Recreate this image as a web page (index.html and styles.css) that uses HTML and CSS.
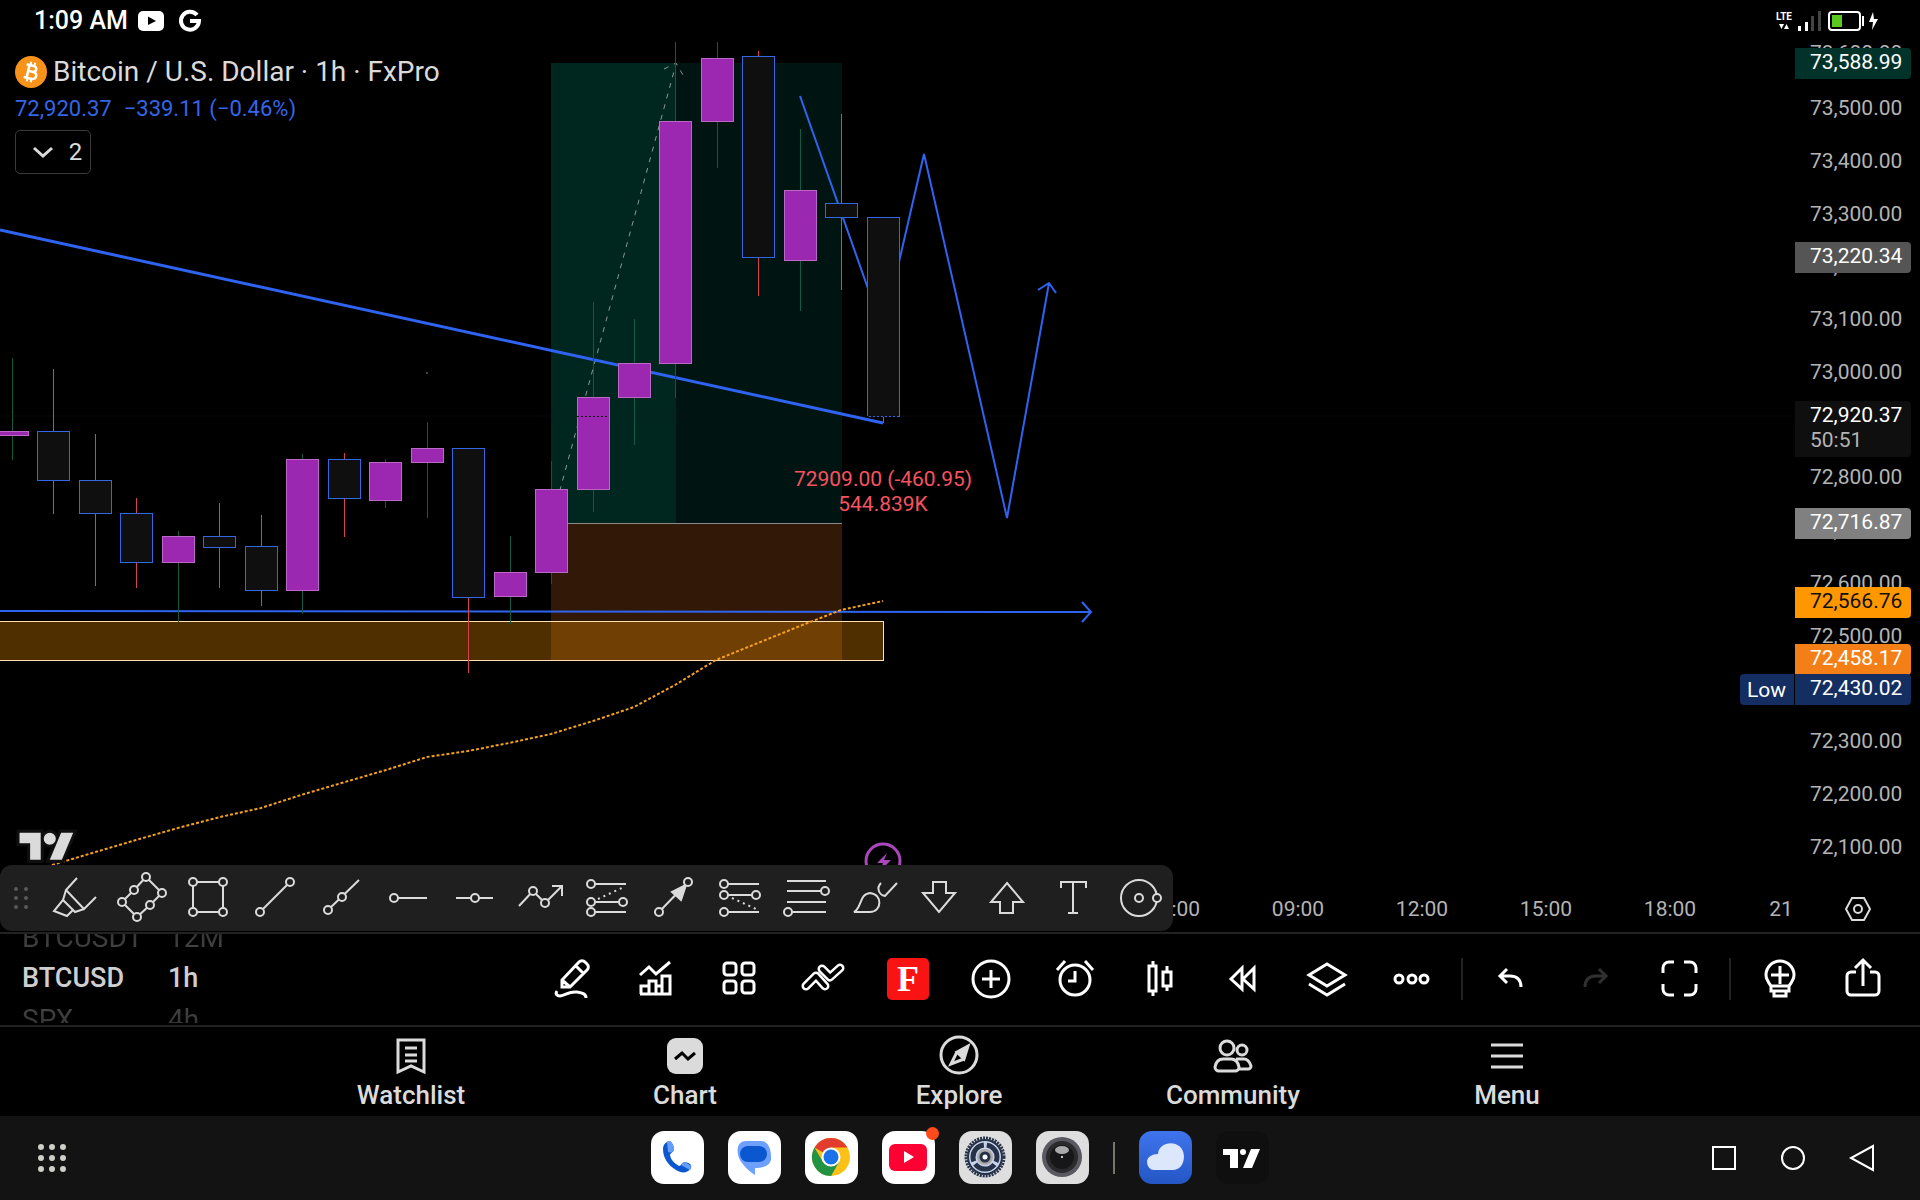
FILE: index.html
```html
<!DOCTYPE html>
<html lang="en">
<head>
<meta charset="utf-8">
<meta name="viewport" content="width=device-width, initial-scale=1">
<title>BTCUSD 1h</title>
<link rel="stylesheet" href="styles.css">
</head>
<body>
<section class="stage">
  <svg class="plot" aria-hidden="true">
    <!-- position tool -->
    <rect class="profit" x="551" y="63" width="291" height="460"/>
    <rect class="profit" x="551" y="63" width="125" height="460"/>
    <rect class="loss" x="551" y="523" width="291" height="137"/>
    <path class="entry" d="M551 523H842"/>
    <!-- support zone -->
    <rect class="zone" x="-4" y="621" width="887" height="39"/>
    <path class="price-line" d="M0 416H1795"/>
    <path class="projection" d="M551 523L676 64M664 69L676 63L683 75"/>
    <!-- trend lines -->
    <path class="trend" d="M0 230L883 423"/>
    <path class="draw" d="M0 611L1091 612M1082 602L1091 612L1082 622"/>
    <path class="draw" d="M800 96L883 331L924 154L1007 518L1049 283M1038 290L1049 283L1056 293"/>
    <!-- wicks -->
    <path class="wick-up" d="M12 358V460M178 531V622M302 454V614M385 459V508M427 422V518M510 536V624M551 461V584M593 302V512M634 319V445M675 42V398M717 42V168M800 129V311"/>
    <path class="wick-down" d="M53 369V514M95 434V586M136 498V588M219 503V588M261 515V606M344 453V537M468 448V673M758 51V296M841 114V290M883 217V423"/>
    <circle cx="427" cy="373" r="1" fill="#555"/>
    <!-- candle bodies -->
    <g class="up">
      <rect x="-4" y="431" width="32" height="4"/>
      <rect x="162" y="536" width="32" height="26"/>
      <rect x="286" y="459" width="32" height="131"/>
      <rect x="369" y="462" width="32" height="38"/>
      <rect x="411" y="448" width="32" height="14"/>
      <rect x="494" y="572" width="32" height="24"/>
      <rect x="535" y="489" width="32" height="83"/>
      <rect x="577" y="397" width="32" height="92"/>
      <rect x="618" y="363" width="32" height="34"/>
      <rect x="659" y="121" width="32" height="242"/>
      <rect x="701" y="58" width="32" height="63"/>
      <rect x="784" y="190" width="32" height="70"/>
    </g>
    <g class="down">
      <rect x="37" y="431" width="32" height="49"/>
      <rect x="79" y="480" width="32" height="33"/>
      <rect x="120" y="513" width="32" height="49"/>
      <rect x="203" y="536" width="32" height="11"/>
      <rect x="245" y="546" width="32" height="44"/>
      <rect x="328" y="459" width="32" height="39"/>
      <rect x="452" y="448" width="32" height="149"/>
      <rect x="742" y="56" width="32" height="201"/>
      <rect x="825" y="203" width="32" height="14"/>
      <rect x="867" y="217" width="32" height="199"/>
    </g>
    <path class="price-dots" d="M577 416H609M867 416H899"/>
    <!-- moving average -->
    <path class="average" d="M52 865L99 851L136 840L178 828L220 817L261 808L301 795L345 782L386 770L427 757L468 751L509 743L551 734L593 721L634 707L675 685L716 660L758 643L800 626L841 610L883 601"/>
    <g class="label"><text x="883" y="486">72909.00 (-460.95)</text><text x="883" y="511">544.839K</text></g>
    <g class="flash"><circle cx="883" cy="861" r="17"/><path d="M887 853L877 863H883L880 871L891 860H884Z"/></g>
  </svg>

  <header class="status">
    <div class="status-side">
      <time>1:09 AM</time>
      <svg width="26" height="20" viewBox="0 0 26 20"><rect width="26" height="20" rx="5" fill="#fff"/><path d="M10 5.500V14L18 10Z" fill="#000"/></svg>
      <svg class="google" width="22" height="22" viewBox="0 0 22 22"><path d="M18 5A9 9 0 1 0 20 11H11" fill="none" stroke="#fff" stroke-width="4"/></svg>
    </div>
    <div class="status-side right">
      <span class="lte">LTE<svg width="10" height="5" viewBox="0 0 10 5"><path d="M0 0H5L2.500 5ZM5 5H10L7.500 0Z" fill="#fff"/></svg></span>
      <svg width="24" height="20" viewBox="0 0 24 20"><path d="M0 15h3v5h-3zM7 11h3v9h-3z" fill="#fff"/><path d="M13 5h3v15h-3zM20 0h3v20h-3z" fill="#444"/></svg>
      <svg class="battery" width="50" height="22" viewBox="0 0 50 22"><rect x="1" y="2" width="31" height="18" rx="3" fill="none" stroke="#fff" stroke-width="2"/><rect x="4" y="5" width="10" height="12" fill="#5ac81e"/><path d="M35 6v10" stroke="#fff" stroke-width="2"/><path d="M45 2L41 12H45L44 20L50 9H46Z" fill="#fff"/></svg>
    </div>
  </header>

  <div class="chart-row">
    <main class="pane">
      <h1 class="symbol">
        <svg width="32" height="32" viewBox="0 0 32 32"><circle cx="16" cy="16" r="16" fill="#f7931a"/><g fill="none" stroke="#fff" transform="rotate(13 16 16)"><path d="M10 9.500H17.500A3 3 0 0 1 17.500 15.500H13H18.500A3.500 3.500 0 0 1 18.500 22.500H10M13 9V23" stroke-width="2.600"/><path d="M14 6V10M18 6V10M14 22V26M18 22V26" stroke-width="2"/></g></svg>
        Bitcoin / U.S. Dollar · 1h · FxPro
      </h1>
      <p class="quote"><span>72,920.37</span><span>−339.11 (−0.46%)</span></p>
      <button class="count" aria-label="Show 2 indicators"><svg width="22" height="22" viewBox="0 0 22 22"><path d="M2 7L11 15L20 7" fill="none" stroke="#dbdbdb" stroke-width="3"/></svg>2</button>
      <svg class="brand" width="62" height="38" viewBox="-3 1 41 25"><path d="M14 22H7V11H0V4H14ZM28 22H20L27.500 4H35.500ZM24 8A4 4 0 1 1 16 8A4 4 0 1 1 24 8Z" fill="#dbdbdb" stroke="#0f0f0f" stroke-width="4" paint-order="stroke"/></svg>
    </main>
    <aside class="price-axis">
      <span class="tag over">73,600.00</span>
      <ul class="ticks">
        <li>73,500.00</li><li>73,400.00</li><li>73,300.00</li><li>73,200.00</li><li>73,100.00</li><li>73,000.00</li><li></li><li>72,800.00</li><li>72,700.00</li><li>72,600.00</li><li>72,500.00</li><li></li><li>72,300.00</li><li>72,200.00</li><li>72,100.00</li>
      </ul>
      <span class="tag target">73,588.99</span>
      <span class="tag alert">73,220.34</span>
      <span class="tag last">72,920.37<small>50:51</small></span>
      <span class="tag entry-tag">72,716.87</span>
      <span class="tag ma">72,566.76</span>
      <span class="tag stop">72,458.17</span>
      <span class="tag low">72,430.02</span>
      <span class="tag low-name">Low</span>
    </aside>
  </div>

  <div class="time-axis">
    <span>06:00</span><span>09:00</span><span>12:00</span><span>15:00</span><span>18:00</span><span class="day">21</span>
    <button class="axis-settings" aria-label="Axis settings"><svg width="28" height="24" viewBox="0 0 28 24"><g fill="none" stroke="#dbdbdb" stroke-width="2"><path d="M8 1H20L26 12L20 23H8L2 12Z"/><circle cx="14" cy="12" r="4"/></g></svg></button>
  </div>

  <div class="drawbar" role="toolbar" aria-label="Favorite drawings">
    <svg class="grip" width="14" height="22" viewBox="0 0 14 22"><path d="M2 2h0M12 2h0M2 11h0M12 11h0M2 20h0M12 20h0" stroke="#5a5a5a" stroke-width="4" stroke-linecap="round"/></svg>
    <button aria-label="Highlighter"><svg viewBox="0 0 44 44"><path d="M24 2L13 14L31 33L43 21M13 14L10 24L1 35L14 40L20 34L22 36L31 33M10 24L20 34"/></svg></button>
    <button aria-label="Rotated rectangle"><svg viewBox="0 0 44 44"><path d="M26 1L42 17L30 29L17 41L2 26L14 14Z"/><circle cx="26" cy="1" r="4"/><circle cx="42" cy="17" r="4"/><circle cx="30" cy="29" r="4"/><circle cx="17" cy="41" r="4"/><circle cx="2" cy="26" r="4"/><circle cx="14" cy="14" r="4"/></svg></button>
    <button aria-label="Rectangle"><svg viewBox="0 0 44 44"><path d="M7 6H37V36H7Z"/><circle cx="7" cy="6" r="4"/><circle cx="37" cy="6" r="4"/><circle cx="7" cy="36" r="4"/><circle cx="37" cy="36" r="4"/></svg></button>
    <button aria-label="Trend line"><svg viewBox="0 0 44 44"><path d="M7 36L37 6"/><circle cx="7" cy="36" r="4"/><circle cx="37" cy="6" r="4"/></svg></button>
    <button aria-label="Ray"><svg viewBox="0 0 44 44"><path d="M9 34L40 4"/><circle cx="9" cy="34" r="4"/><circle cx="23" cy="21" r="4"/></svg></button>
    <button aria-label="Horizontal ray"><svg viewBox="0 0 44 44"><path d="M8 22H41"/><circle cx="8" cy="22" r="4"/></svg></button>
    <button aria-label="Horizontal line"><svg viewBox="0 0 44 44"><path d="M4 22H41"/><circle cx="23" cy="22" r="4"/></svg></button>
    <button aria-label="Path"><svg viewBox="0 0 44 44"><path d="M0 30L14 15L26 27L43 10M33 10H43V20"/><circle cx="14" cy="15" r="4"/><circle cx="26" cy="27" r="4"/></svg></button>
    <button aria-label="Long position"><svg viewBox="0 0 44 44"><path d="M5 8H40M5 26H37M5 36H40"/><path class="dots" d="M12 23L38 11"/><circle cx="5" cy="8" r="4"/><circle cx="5" cy="26" r="4"/><circle cx="37" cy="26" r="4"/><circle cx="5" cy="36" r="4"/></svg></button>
    <button aria-label="Arrow"><svg viewBox="0 0 44 44"><path d="M7 36L36 6"/><path class="solid" d="M34 9L20 16L29 24Z"/><circle cx="7" cy="36" r="4"/><circle cx="36" cy="6" r="4"/></svg></button>
    <button aria-label="Short position"><svg viewBox="0 0 44 44"><path d="M5 8H40M5 19H37M5 36H40"/><path class="dots" d="M13 22L37 33"/><circle cx="5" cy="8" r="4"/><circle cx="5" cy="19" r="4"/><circle cx="37" cy="19" r="4"/><circle cx="5" cy="36" r="4"/></svg></button>
    <button aria-label="Fib retracement"><svg viewBox="0 0 44 44"><path d="M2 5H41M2 15H40M2 26H41M3 36H41"/><circle cx="40" cy="15" r="4"/><circle cx="3" cy="36" r="4"/></svg></button>
    <button aria-label="Brush"><svg viewBox="0 0 44 44"><path d="M2 36C10 32 7 18 18 17C31 18 30 36 18 36ZM29 7C24 12 27 19 33 20L45 7"/></svg></button>
    <button aria-label="Arrow down"><svg viewBox="0 0 44 44"><path d="M15 6H28V17H37L21 36L5 17H15Z"/></svg></button>
    <button aria-label="Arrow up"><svg viewBox="0 0 44 44"><path d="M22 7L38 26H28V37H15V26H6Z"/></svg></button>
    <button aria-label="Text"><svg viewBox="0 0 44 44"><path d="M10 12V6H35V12M22 6V37M17 37H27"/></svg></button>
    <button aria-label="Circle"><svg viewBox="0 0 44 44"><circle cx="21" cy="22" r="18"/><circle cx="21" cy="22" r="4"/><circle cx="39" cy="22" r="4"/></svg></button>
  </div>
</section>

<section class="tools">
  <div class="wheel symbols"><span>BTCUSDT</span><b>BTCUSD</b><span>SPX</span></div>
  <div class="wheel intervals"><span>12M</span><b>1h</b><span>4h</span></div>
  <div class="actions">
    <button aria-label="Draw"><svg viewBox="0 0 44 44"><path d="M12 30V23L29 5A4 4 0 0 1 35 5L37 7A4 4 0 0 1 37 13L20 30ZM26 9L33 16M12 23L20 30M7 34C5 37 7 39 10 39C16 38 19 34 27 35C33 36 36 37 36 41"/></svg></button>
    <button aria-label="Indicators"><svg viewBox="0 0 44 44"><path d="M6 18L15 10L22 17L36 5M7 37V29H15V24H22V37M15 29V37M22 29H28M28 37V19H36V37ZM6 37H37"/></svg></button>
    <button aria-label="Layouts"><svg viewBox="0 0 44 44"><rect x="6" y="6" width="12" height="12" rx="3"/><rect x="24" y="6" width="12" height="12" rx="3"/><rect x="6" y="24" width="12" height="12" rx="3"/><rect x="24" y="24" width="12" height="12" rx="3"/></svg></button>
    <button aria-label="Patterns"><svg viewBox="0 0 44 44"><g stroke-linecap="round" stroke-linejoin="round"><path d="M4 29L14 19L23 29" stroke-width="9"/><path d="M4 29L14 19L23 29" stroke="#000" stroke-width="4"/><path d="M20 12L28 20L38 11" stroke-width="9"/><path d="M20 12L28 20L38 11" stroke="#000" stroke-width="4"/></g></svg></button>
    <button aria-label="Favorite indicator"><span class="fbadge">F</span></button>
    <button aria-label="Add"><svg viewBox="0 0 44 44"><circle cx="21" cy="22" r="18"/><path d="M12 22H30M21 13V31"/></svg></button>
    <button aria-label="Alert"><svg viewBox="0 0 44 44"><circle cx="21" cy="23" r="15"/><path d="M21 14V24H14M3 13L11 4M31 4L39 13"/></svg></button>
    <button aria-label="Chart type"><svg viewBox="0 0 44 44"><path d="M11 9H18V34H11ZM15 4V9M15 34V39M25 15H33V29H25ZM29 9V15M29 29V34"/></svg></button>
    <button aria-label="Replay"><svg viewBox="0 0 44 44"><path d="M9 22L20 11V32ZM21 22L32 11V32Z"/></svg></button>
    <button aria-label="Object tree"><svg viewBox="0 0 44 44"><path d="M21 7L39 18L21 29L3 18ZM3 27L21 38L39 27"/></svg></button>
    <button aria-label="More"><svg viewBox="0 0 44 44"><circle cx="9" cy="22" r="4"/><circle cx="22" cy="22" r="4"/><circle cx="34" cy="22" r="4"/></svg></button>
    <i class="rule"></i>
    <button aria-label="Undo"><svg viewBox="0 0 44 44"><path d="M31 30C31 22 26 19 20 19H10M17 12L10 19L17 26"/></svg></button>
    <button aria-label="Redo" disabled><svg viewBox="0 0 44 44"><path d="M11 30C11 22 16 19 22 19H32M25 12L32 19L25 26"/></svg></button>
    <button aria-label="Full screen"><svg viewBox="0 0 44 44"><path d="M5 16V11A6 6 0 0 1 11 5H16M26 5H32A6 6 0 0 1 38 11V16M38 27V32A6 6 0 0 1 32 38H26M16 38H11A6 6 0 0 1 5 32V27"/></svg></button>
    <i class="rule"></i>
    <button aria-label="Ideas"><svg viewBox="0 0 44 44"><path d="M13 29C10 25 8 22 8 18A14 14 0 0 1 36 18C36 22 34 25 31 29ZM13 29V34H31V29M16 34V39H28V34M13 18H31M22 9V27"/></svg></button>
    <button aria-label="Share"><svg viewBox="0 0 44 44"><path d="M14 15H9A4 4 0 0 0 5 19V34A4 4 0 0 0 9 38H33A4 4 0 0 0 37 34V19A4 4 0 0 0 33 15H28M21 29V4M13 11L21 3L29 11"/></svg></button>
  </div>
</section>

<nav class="tabs">
  <a href="#watchlist"><svg viewBox="0 0 40 40"><path d="M7 4H33V36L20 30L7 36ZM14 12H26M14 19H26M14 25H26"/></svg>Watchlist</a>
  <a href="#chart"><svg viewBox="0 0 40 40"><rect x="2" y="2" width="36" height="36" rx="9" fill="#dbdbdb" stroke="none"/><path d="M10 23L17 17L23 23L30 17" stroke="#000"/></svg>Chart</a>
  <a href="#explore"><svg viewBox="0 0 40 40"><circle cx="20" cy="19" r="18"/><path d="M29 10L25 23L18 16Z" fill="#dbdbdb"/><path d="M18 16L12 28L25 23"/></svg>Explore</a>
  <a href="#community"><svg viewBox="0 0 40 40"><circle cx="14" cy="12" r="7"/><circle cx="29" cy="14" r="5"/><path d="M6 35A4 4 0 0 1 2 31C3 26 6 23 10 23H18C22 23 25 26 26 31A4 4 0 0 1 22 35ZM23 23H31C35 23 37 27 38 30A3 3 0 0 1 35 33H26"/></svg>Community</a>
  <a href="#menu"><svg viewBox="0 0 40 40"><path d="M4 9H36M4 20H36M4 31H36"/></svg>Menu</a>
</nav>

<footer class="dock">
  <div class="dock-left"><button aria-label="All apps"><svg width="30" height="30" viewBox="0 0 30 30"><path d="M4 4h0M15 4h0M26 4h0M4 15h0M15 15h0M26 15h0M4 26h0M15 26h0M26 26h0" stroke="#cfcfc8" stroke-width="6" stroke-linecap="round"/></svg></button></div>
  <div class="apps">
    <button class="app" aria-label="Phone"><svg viewBox="0 0 53 53"><path d="M16 11C19 9 22 11 23 18C23 21 19 22 19 24C20 29 23 32 28 35C30 35 31 31 34 31C39 32 41 34 40 37C37 42 31 43 25 39C17 34 12 27 12 18C12 14 14 12 16 11Z" fill="#0b57d0"/><path d="M16 11C19 9 22 11 23 18C23 21 19 22 17 21ZM30 34C31 31 34 30 37 33C40 34 41 35 39 39Z" fill="#669df6"/></svg></button>
    <button class="app" aria-label="Messages"><svg viewBox="0 0 53 53"><path d="M18 10H33C40 10 43 18 43 25C44 33 38 37 27 37V44C22 41 17 36 14 32C8 25 7 10 18 10Z" fill="#6ea0ff"/><rect x="12" y="15" width="27" height="16" rx="8" fill="#0b57d0"/></svg></button>
    <button class="app" aria-label="Chrome"><svg viewBox="0 0 53 53"><circle cx="26" cy="26" r="19" fill="#fbc116"/><path d="M26 26L9.500 16.500A19 19 0 0 1 42.500 16.500H26Z" fill="#e33b2e"/><path d="M9.500 16.500A19 19 0 0 0 26 45L34.200 30.700L26 26L18 31Z" fill="#229342"/><circle cx="26" cy="26" r="9.500" fill="#fff"/><circle cx="26" cy="26" r="7.500" fill="#1a73e8"/></svg></button>
    <button class="app notify" aria-label="YouTube"><svg viewBox="0 0 53 53"><rect x="7" y="13" width="38" height="27" rx="6" fill="#ff0033"/><path d="M22 20V32L32 26Z" fill="#fff"/></svg></button>
    <button class="app metal" aria-label="Settings"><svg viewBox="0 0 53 53"><circle cx="26" cy="26" r="19" fill="none" stroke="#263248" stroke-width="3" stroke-dasharray="2 1"/><circle cx="26" cy="26" r="17" fill="#c7d3ea" stroke="#263248" stroke-width="2"/><circle cx="26" cy="26" r="12" fill="none" stroke="#263248" stroke-width="5" stroke-dasharray="22 3" stroke-dashoffset="-8"/><circle cx="26" cy="26" r="8" fill="#aaa"/><circle cx="26" cy="26" r="4" fill="#fff" stroke="#263248" stroke-width="3"/></svg></button>
    <button class="app metal" aria-label="Camera"><svg viewBox="0 0 53 53"><circle cx="26" cy="26" r="20" fill="#5a5961"/><circle cx="26" cy="26" r="16" fill="#2b2b2e"/><circle cx="26" cy="26" r="12" fill="#171719"/><ellipse cx="26" cy="19" rx="7" ry="4" fill="#aaa"/><circle cx="26" cy="26" r="1" fill="#fff"/></svg></button>
    <i class="divider"></i>
    <button class="app cloud" aria-label="Weather"><svg viewBox="0 0 53 53"><path d="M15 39A7 8 0 0 1 8 31C8 26 13 23 19 23C20 9 44 8 45 25C45 34 40 39 34 39Z" fill="#dce7fb"/></svg></button>
    <button class="app dark" aria-label="TradingView"><svg viewBox="0 0 53 53"><path d="M22 37H14V24H7V18H22ZM36 37H27L35 18H44ZM30 21A3 3 0 1 1 24 21A3 3 0 1 1 30 21Z" fill="#fff"/></svg></button>
  </div>
  <div class="dock-right">
    <button aria-label="Recents"><svg viewBox="0 0 28 28"><rect x="3" y="3" width="22" height="22"/></svg></button>
    <button aria-label="Home"><svg viewBox="0 0 28 28"><circle cx="14" cy="14" r="11"/></svg></button>
    <button aria-label="Back"><svg viewBox="0 0 28 28"><path d="M25 2V26L3 14Z"/></svg></button>
  </div>
</footer>
</body>
</html>
```
FILE: styles.css
```css
* { box-sizing: border-box; }
body {
  margin: 0;
  min-height: 100vh;
  display: flex;
  flex-direction: column;
  background: #000;
  color: #dbdbdb;
  font-family: Roboto, "Liberation Sans", sans-serif;
  overflow-x: hidden;
}
button {
  margin: 0;
  padding: 0;
  border: 0;
  background: none;
  color: inherit;
  font: inherit;
  display: flex;
  align-items: center;
  justify-content: center;
}
svg { display: block; flex: none; overflow: visible; }
a { color: inherit; text-decoration: none; }

/* chart stage */
.stage {
  position: relative;
  flex: 1;
  display: flex;
  flex-direction: column;
}
.plot { position: absolute; inset: 0; width: 100%; height: 100%; overflow: hidden; }
.profit { fill: #00a082; fill-opacity: 0.13; }
.loss { fill: #311807; }
.entry { stroke: #8a8a8a; shape-rendering: crispEdges; }
.zone { fill: #ff9800; fill-opacity: 0.31; stroke: #ffe0b2; shape-rendering: crispEdges; }
.price-line { stroke: #151515; stroke-dasharray: 1 2; }
.price-dots { stroke: #0f0f0f; stroke-width: 1; stroke-dasharray: 2 2; shape-rendering: crispEdges; }
.projection { fill: none; stroke: #8a9a94; stroke-dasharray: 5 6; }
.trend { stroke: #2f64f2; stroke-width: 3; }
.draw { fill: none; stroke: #2f64f2; stroke-width: 2; }
.wick-up { stroke: #0e5a45; shape-rendering: crispEdges; }
.wick-down { stroke: #d9434e; shape-rendering: crispEdges; }
.up { fill: #9c27b0; stroke: #b968c6; shape-rendering: crispEdges; }
.down { fill: #0f0f0f; stroke: #3467e4; shape-rendering: crispEdges; }
.average { fill: none; stroke: #f5a11f; stroke-width: 2; stroke-dasharray: 3 2; }
.label { fill: #f7525f; font-size: 21px; text-anchor: middle; }
.flash circle { fill: none; stroke: #ab47bc; stroke-width: 3; }
.flash path { fill: #ab47bc; }

.status {
  position: relative;
  height: 40px;
  padding: 0 42px 0 34px;
  display: flex;
  justify-content: space-between;
  align-items: center;
  color: #fff;
}
.status-side { display: flex; align-items: center; gap: 8px; height: 40px; padding-top: 1px; }
.status .right { gap: 6px; }
.status time { font-size: 25px; font-weight: 500; margin-right: 2px; }
.google { margin-left: 7px; }
.lte {
  display: flex;
  flex-direction: column;
  align-items: center;
  gap: 2px;
  font-size: 10px;
  font-weight: 700;
  line-height: 10px;
}

.chart-row { position: relative; flex: 1; display: flex; }
.pane { flex: 1; display: flex; flex-direction: column; align-items: flex-start; padding: 14px 15px 0; }
.symbol {
  margin: 0;
  display: flex;
  align-items: center;
  gap: 6px;
  font-size: 28px;
  line-height: 36px;
  font-weight: 400;
}
.quote {
  margin: 4px 0 6px;
  display: flex;
  gap: 12px;
  color: #3565e8;
  font-size: 22px;
  line-height: 30px;
}
.count {
  width: 76px;
  height: 44px;
  border: 1px solid #3a3a3a;
  border-radius: 5px;
  gap: 15px;
  padding-left: 8px;
  font-size: 24px;
}
.brand { margin-top: auto; margin-bottom: 20px; }

.price-axis {
  position: relative;
  width: 125px;
  padding: 55px 0 26px;
  font-size: 21px;
  line-height: 26px;
}
.ticks {
  height: 100%;
  margin: 0;
  padding: 0 0 0 15px;
  list-style: none;
  display: flex;
  flex-direction: column;
  justify-content: space-between;
  color: #b4b4b4;
}
.ticks li { height: 26px; }
.tag {
  position: absolute;
  left: 0;
  width: 116px;
  height: 31px;
  padding-left: 15px;
  border-radius: 0 4px 4px 0;
  color: #fff;
  line-height: 28px;
}
.over { top: -1px; color: #b4b4b4; }
.target { top: 8px; background: #02332b; }
.alert { top: 202px; background: #555; }
.last { top: 361px; height: 56px; background: #0f0f0f; }
.last small { display: block; font-size: 21px; line-height: 22px; color: #b4b4b4; }
.entry-tag { top: 468px; background: #808080; }
.ma { top: 547px; background: #ff9800; color: #0f0f0f; }
.stop { top: 604px; background: #f57f17; }
.low { top: 634px; background: #142e61; }
.low-name {
  top: 634px;
  left: -55px;
  width: 54px;
  padding-left: 7px;
  border-radius: 4px 0 0 4px;
  background: #142e61;
  line-height: 32px;
}

.time-axis {
  position: relative;
  height: 46px;
  display: flex;
  justify-content: flex-end;
  align-items: center;
  padding-right: 34px;
  font-size: 21px;
  color: #b4b4b4;
}
.time-axis span { width: 124px; text-align: center; }
.time-axis .day { width: 98px; }
.axis-settings { width: 56px; }

.drawbar {
  position: absolute;
  left: 0;
  bottom: 1px;
  width: 1173px;
  max-width: 100%;
  height: 66px;
  display: flex;
  align-items: center;
  border-radius: 12px;
  background: #1f1f1f;
}
.grip { margin: 0 14px; }
.drawbar button { flex: 1; height: 66px; }
.drawbar button svg { width: 44px; height: 44px; fill: none; stroke: #dbdbdb; stroke-width: 2; }
.drawbar circle { fill: #1f1f1f; }
.drawbar circle:first-child { fill: none; }
.drawbar .dots { stroke-dasharray: 2 4; }
.drawbar .solid { fill: #dbdbdb; }

/* toolbar under the chart */
.tools {
  height: 93px;
  border-top: 2px solid #222;
  padding: 0 14px 2px 22px;
  display: flex;
  align-items: center;
}
.wheel {
  height: 89px;
  overflow: hidden;
  display: flex;
  flex-direction: column;
  justify-content: center;
  font-size: 28px;
}
.wheel span, .wheel b { flex: none; height: 41px; line-height: 41px; }
.wheel b { font-size: 27px; font-weight: 500; color: #cfcfcf; }
.wheel span { color: transparent; background: linear-gradient(#262626, #4c4c4c); background-clip: text; }
.wheel span:last-child { background: linear-gradient(#4c4c4c, #262626); background-clip: text; }
.symbols { width: 146px; }
.actions { margin-left: auto; display: flex; align-items: center; }
.actions button { width: 84px; height: 60px; color: #fff; }
.actions button svg { width: 44px; height: 44px; fill: none; stroke: #fff; stroke-width: 3; }
.actions button:disabled svg { stroke: #303030; }
.rule { width: 2px; height: 42px; margin: 0 7px; background: #222; }
.fbadge {
  width: 42px;
  height: 42px;
  border-radius: 5px;
  background: #f91313;
  font: 700 36px/42px "Liberation Serif", serif;
}

.tabs {
  height: 91px;
  border-top: 2px solid #222;
  padding-right: 2px;
  display: flex;
  justify-content: center;
}
.tabs a {
  width: 274px;
  padding-top: 9px;
  display: flex;
  flex-direction: column;
  align-items: center;
  gap: 3px;
  font-size: 26px;
  line-height: 32px;
  font-weight: 500;
}
.tabs svg { width: 40px; height: 40px; fill: none; stroke: #dbdbdb; stroke-width: 3; }

/* system dock */
.dock {
  height: 84px;
  display: grid;
  grid-template-columns: 1fr auto 1fr;
  align-items: center;
  padding-bottom: 1px;
  background: #131313;
}
.dock-left { padding-left: 37px; }
.apps { display: flex; align-items: center; gap: 24px; }
.app { position: relative; width: 53px; height: 53px; border-radius: 13px; background: #fff; }
.app svg { width: 53px; height: 53px; }
.metal { background: #dedede; }
.cloud { background: linear-gradient(#3f74ee, #2456c4); }
.dark { background: #0f0f0f; }
.notify::after {
  content: "";
  position: absolute;
  top: -4px;
  right: -4px;
  width: 13px;
  height: 13px;
  border-radius: 50%;
  background: #ff4a1c;
}
.divider { width: 2px; height: 32px; background: #77756c; }
.dock-right { display: flex; justify-content: flex-end; gap: 41px; padding-right: 44px; }
.dock-right svg { width: 28px; height: 28px; fill: none; stroke: #fff; stroke-width: 2; }
```
